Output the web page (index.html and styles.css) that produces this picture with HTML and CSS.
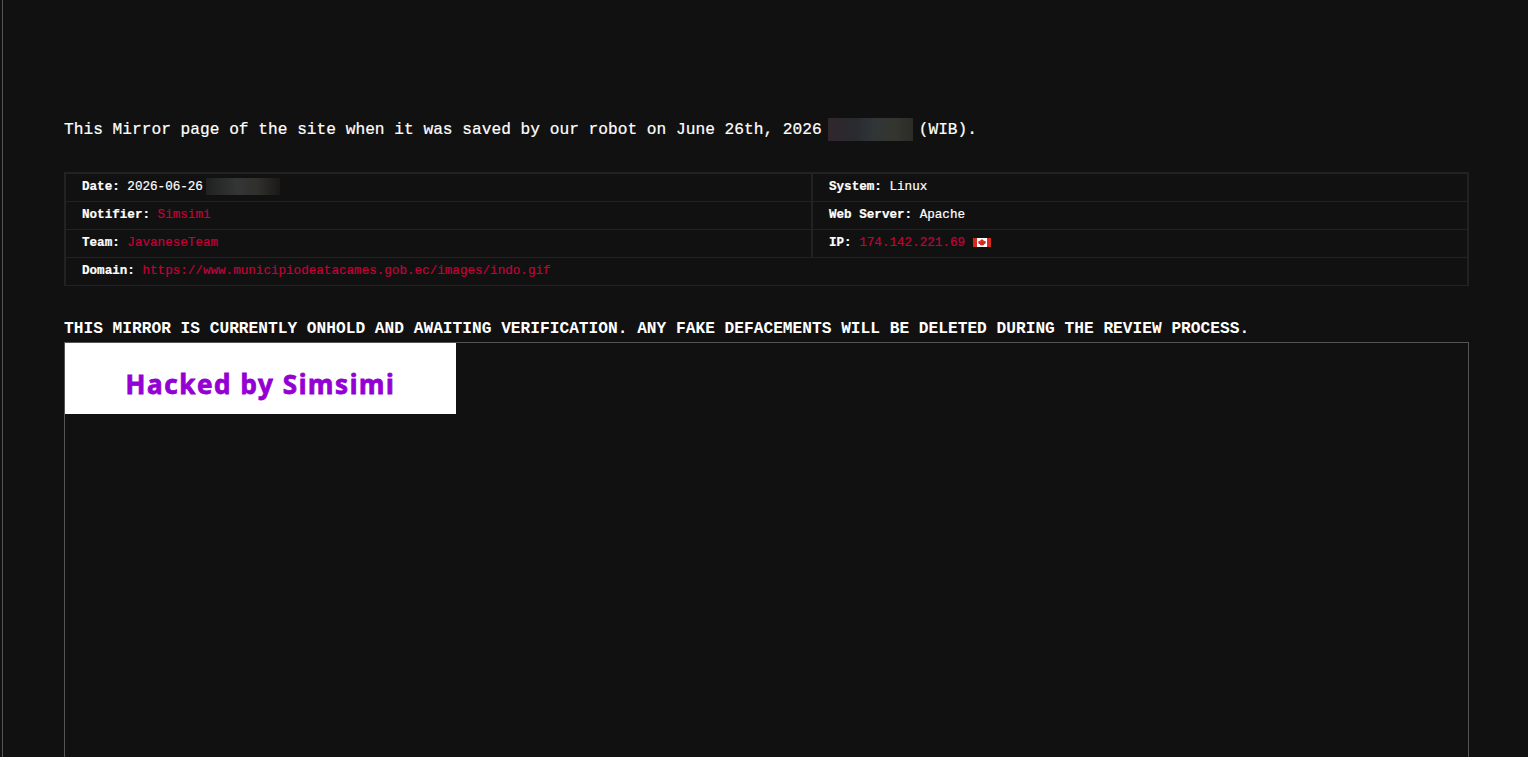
FILE: index.html
```
<!DOCTYPE html>
<html lang="en">
  <head>
    <meta charset="UTF-8" />
    <meta name="viewport" content="width=device-width, initial-scale=1.0" />
    <title>Mirror</title>
    <link rel="stylesheet" href="styles.css">
  </head>
  <body>
    <main class="page">
      <p class="saved">This Mirror page of the site when it was saved by our robot on June 26th, 2026<span class="mask mask-large"></span>(WIB).</p>

      <table class="info">
        <tr>
          <td class="left"><b>Date:</b> 2026-06-26<span class="mask mask-small"></span></td>
          <td><b>System:</b> Linux</td>
        </tr>
        <tr>
          <td class="left"><b>Notifier:</b> <a href="#">Simsimi</a></td>
          <td><b>Web Server:</b> Apache</td>
        </tr>
        <tr>
          <td class="left"><b>Team:</b> <a href="#">JavaneseTeam</a></td>
          <td><b>IP:</b> <a href="#">174.142.221.69</a>
            <svg class="flag" viewBox="0 0 18 9" width="18" height="9">
              <path fill="#fff" d="M0 0h18v9H0z" />
              <path fill="#d52b1e" d="M0 0h4v9H0zM14 0h4v9h-4z" />
              <path fill="#d52b1e" d="M9 .8l.9 1.500.9-.4-.2 1.700 1.200-.8.300.8 1-.1-.5 1.200.300.400-2 1.500.1.700-1.700-.2v1.200h-.6V7.100l-1.700.2.1-.7-2-1.500.3-.4-.5-1.200 1 .1.300-.8 1.200.8-.2-1.700.9.4z" />
            </svg>
          </td>
        </tr>
        <tr>
          <td colspan="2"><b>Domain:</b> <a href="#">https://www.municipiodeatacames.gob.ec/images/indo.gif</a></td>
        </tr>
      </table>

      <p class="notice">THIS MIRROR IS CURRENTLY ONHOLD AND AWAITING VERIFICATION. ANY FAKE DEFACEMENTS WILL BE DELETED DURING THE REVIEW PROCESS.</p>

      <div class="frame">
        <div class="banner">Hacked by Simsimi</div>
      </div>
    </main>
  </body>
</html>
```
FILE: styles.css
```
* {
  box-sizing: border-box;
}

body {
  margin: 0;
  background: #111;
  color: #fff;
  font-family: "Liberation Mono", monospace;
  font-size: 16.19px;
  overflow: hidden;
}

.page {
  display: flex;
  flex-direction: column;
  height: 757px;
  margin-left: 2px;
  padding: 118px 59px 0 61px;
  border-left: 1px solid #555;
}

.saved {
  display: flex;
  height: 23px;
  margin: 0 0 31px;
  line-height: 25px;
  white-space: pre;
  -webkit-text-stroke: 0.2px;
}

.mask {
  display: inline-block;
}

.mask-large {
  width: 85px;
  height: 23px;
  margin: 0 6px;
  background: linear-gradient(90deg, #30272a, #292a30 32%, #303538 54%, #34362e 78%, #2b2b28);
}

.mask-small {
  width: 74px;
  height: 17px;
  margin: -1px 0 0 3px;
  vertical-align: top;
  background: linear-gradient(90deg, #202020, #343636 42%, #302f2c 70%, #1a1917);
}

.info {
  width: 1405px;
  border: 2px solid #222;
  border-bottom: 0;
  border-spacing: 0;
  table-layout: fixed;
  font-size: 12.6px;
  -webkit-text-stroke: 0.2px;
}

.info td {
  height: 28px;
  padding: 0 16px;
  border-bottom: 1px solid #222;
  line-height: 17px;
  white-space: nowrap;
}

.info .left {
  width: 747px;
  border-right: 2px solid #222;
}

.info a {
  color: #c70039;
  text-decoration: none;
}

.flag {
  display: inline-block;
  vertical-align: -1px;
}

.notice {
  height: 24px;
  margin: 32px 0 0;
  font-weight: bold;
  line-height: 23px;
  white-space: nowrap;
}

.frame {
  flex: 1;
  width: 1405px;
  border: 1px solid #555;
  border-bottom: 0;
}

.banner {
  width: 391px;
  height: 71px;
  padding-top: 6px;
  background: #fff;
  color: #9400d3;
  font: bold 26px/71px "Noto Sans", sans-serif;
  letter-spacing: 1.6px;
  text-align: center;
  -webkit-text-stroke: 0.8px;
}
```
